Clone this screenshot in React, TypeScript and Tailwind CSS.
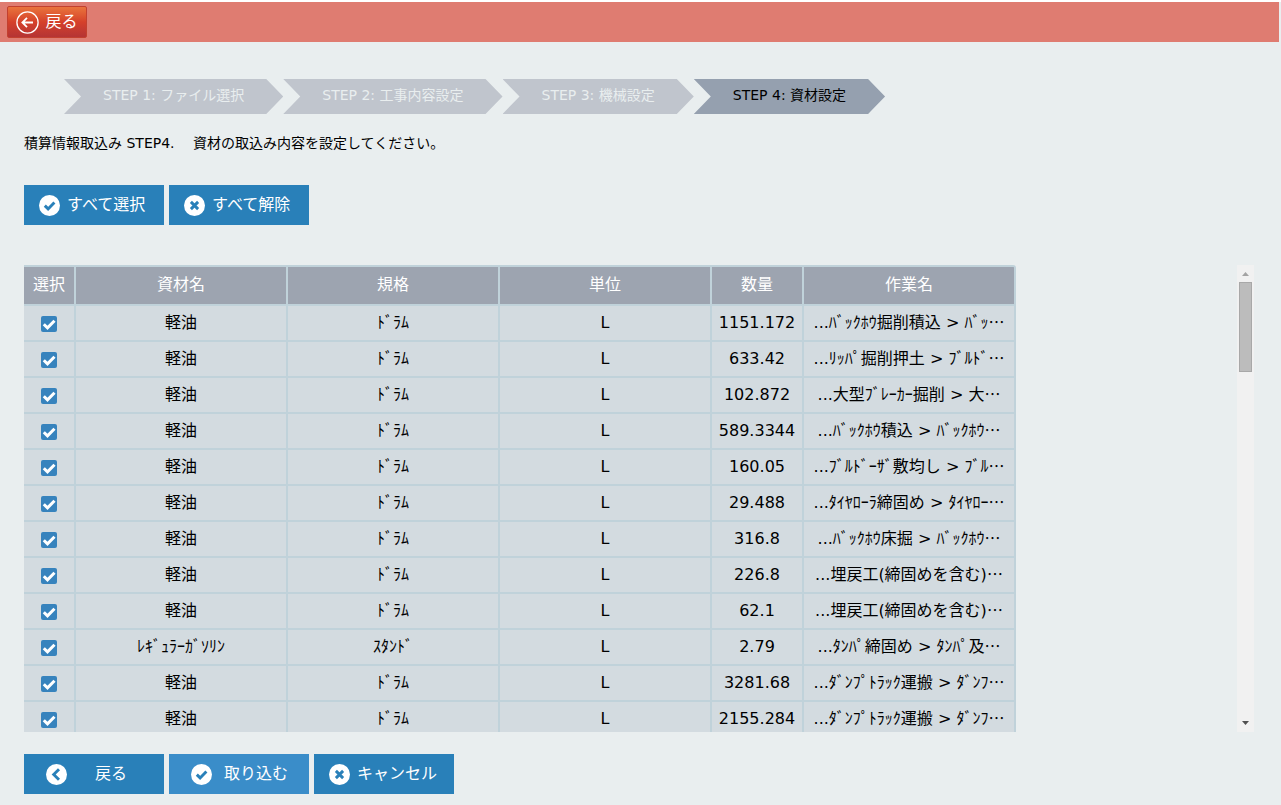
import React, { useState } from 'react';

interface Material {
    name: string;
    spec: string;
    unit: string;
    amount: string;
    work: string;
}

const steps = ['STEP 1: ファイル選択', 'STEP 2: 工事内容設定', 'STEP 3: 機械設定', 'STEP 4: 資材設定'];

const materials: Material[] = [
    { name: '軽油', spec: 'ﾄﾞﾗﾑ', unit: 'L', amount: '1151.172', work: 'ﾊﾞｯｸﾎｳ掘削積込 > ﾊﾞｯ' },
    { name: '軽油', spec: 'ﾄﾞﾗﾑ', unit: 'L', amount: '633.42', work: 'ﾘｯﾊﾟ掘削押土 > ﾌﾞﾙﾄﾞ' },
    { name: '軽油', spec: 'ﾄﾞﾗﾑ', unit: 'L', amount: '102.872', work: '大型ﾌﾞﾚｰｶｰ掘削 > 大' },
    { name: '軽油', spec: 'ﾄﾞﾗﾑ', unit: 'L', amount: '589.3344', work: 'ﾊﾞｯｸﾎｳ積込 > ﾊﾞｯｸﾎｳ' },
    { name: '軽油', spec: 'ﾄﾞﾗﾑ', unit: 'L', amount: '160.05', work: 'ﾌﾞﾙﾄﾞｰｻﾞ敷均し > ﾌﾞﾙ' },
    { name: '軽油', spec: 'ﾄﾞﾗﾑ', unit: 'L', amount: '29.488', work: 'ﾀｲﾔﾛｰﾗ締固め > ﾀｲﾔﾛｰ' },
    { name: '軽油', spec: 'ﾄﾞﾗﾑ', unit: 'L', amount: '316.8', work: 'ﾊﾞｯｸﾎｳ床掘 > ﾊﾞｯｸﾎｳ' },
    { name: '軽油', spec: 'ﾄﾞﾗﾑ', unit: 'L', amount: '226.8', work: '埋戻工(締固めを含む)' },
    { name: '軽油', spec: 'ﾄﾞﾗﾑ', unit: 'L', amount: '62.1', work: '埋戻工(締固めを含む)' },
    { name: 'ﾚｷﾞｭﾗｰｶﾞｿﾘﾝ', spec: 'ｽﾀﾝﾄﾞ', unit: 'L', amount: '2.79', work: 'ﾀﾝﾊﾟ締固め > ﾀﾝﾊﾟ及' },
    { name: '軽油', spec: 'ﾄﾞﾗﾑ', unit: 'L', amount: '3281.68', work: 'ﾀﾞﾝﾌﾟﾄﾗｯｸ運搬 > ﾀﾞﾝﾌ' },
    { name: '軽油', spec: 'ﾄﾞﾗﾑ', unit: 'L', amount: '2155.284', work: 'ﾀﾞﾝﾌﾟﾄﾗｯｸ運搬 > ﾀﾞﾝﾌ' },
];

const columns = [
    { label: '選択', width: 'w-[52px]' },
    { label: '資材名', width: 'w-[212px]' },
    { label: '規格', width: 'w-[212px]' },
    { label: '単位', width: 'w-[212px]' },
    { label: '数量', width: 'w-[92px]' },
    { label: '作業名', width: 'w-[212px]' },
];

const iconPaths = {
    check: 'M5.800 10.600l3.300 3.300 6.300-6.500',
    cross: 'M6.900 6.900l7.200 7.200M14.100 6.900l-7.200 7.200',
    left: 'M13 5.200l-5.300 5.300 5.300 5.300',
};

const CircleIcon: React.FC<{ type: keyof typeof iconPaths }> = ({ type }) => (
    <svg className="w-[21px] h-[21px] shrink-0" viewBox="0 0 21 21" fill="none" aria-hidden="true">
        <circle cx="10.5" cy="10.5" r="10.5" fill="white" />
        <path d={iconPaths[type]} stroke="#2980b9" strokeWidth="2.9" />
    </svg>
);

interface ActionButtonProps {
    icon: keyof typeof iconPaths;
    label: string;
    className?: string;
    onClick?: () => void;
}

const ActionButton: React.FC<ActionButtonProps> = ({ icon, label, className = 'pl-[15px] gap-[7px] bg-[#2980b9]', onClick }) => (
    <button
        type="button"
        onClick={onClick}
        className={`flex w-[140px] h-10 items-center text-base leading-6 text-white whitespace-nowrap ${className}`}
    >
        <CircleIcon type={icon} />
        {label}
    </button>
);

const App: React.FC = () => {
    const [selected, setSelected] = useState<boolean[]>(materials.map(() => true));

    const setAll = (value: boolean) => setSelected(materials.map(() => value));
    const toggle = (index: number) => setSelected(selected.map((v, i) => (i === index ? !v : v)));

    return (
        <div
            lang="ja"
            className="flex h-screen flex-col border-t-2 border-white bg-[#e9eeef] text-black font-['DejaVu_Sans','Noto_Sans_CJK_JP',sans-serif]"
        >
            <header className="flex h-10 shrink-0 items-center bg-[#df7c71] px-[7px] mr-[2px]">
                <button
                    type="button"
                    className="flex h-8 w-20 items-center justify-center gap-[6px] rounded-[2px] border border-[#c3402f] bg-linear-to-b from-[#e9733c] via-[#d5402a] to-[#b53434] text-base leading-6 text-white"
                >
                    <svg className="w-[23px] h-[23px]" viewBox="0 0 23 23" fill="none" stroke="white" aria-hidden="true">
                        <circle cx="11.5" cy="11.5" r="10.6" strokeWidth="1.3" />
                        <path d="M17 11.5H6.6M11 6.9l-4.6 4.6 4.6 4.6" strokeWidth="1.8" />
                    </svg>
                    戻る
                </button>
            </header>

            <main className="flex min-h-0 flex-1 flex-col px-6 pb-[11px]">
                <ol className="ml-10 mt-[37px] flex shrink-0 text-sm">
                    {steps.map((step, i) => (
                        <li
                            key={step}
                            className={`h-[35px] px-[39px] leading-8 whitespace-nowrap [clip-path:polygon(0_0,calc(100%-17px)_0,100%_50%,calc(100%-17px)_100%,0_100%,17px_50%)] ${i === 3 ? 'bg-[#95a0af] text-black' : 'bg-[#c0c5cd] text-[#e9eeef]'}`}
                        >
                            {step}
                        </li>
                    ))}
                </ol>

                <p className="mt-[17px] text-sm leading-6">積算情報取込み STEP4.　 資材の取込み内容を設定してください。</p>

                <div className="mt-[30px] flex gap-[5px]">
                    <ActionButton icon="check" label="すべて選択" onClick={() => setAll(true)} />
                    <ActionButton icon="cross" label="すべて解除" onClick={() => setAll(false)} />
                </div>

                <div className="mt-10 mr-[3px] flex min-h-0 flex-1">
                    <div className="min-w-0 flex-1 overflow-y-auto [scrollbar-width:none]">
                        <table className="w-[992px] table-fixed border-separate border-spacing-0 text-center text-base leading-6">
                            <thead>
                                <tr className="h-[41px]">
                                    {columns.map(col => (
                                        <th
                                            key={col.label}
                                            className={`${col.width} border-y-2 border-r-2 border-[#c0d2da] bg-[#9da4b0] p-0 pb-[2px] font-normal text-white last:rounded-tr-[3px]`}
                                        >
                                            {col.label}
                                        </th>
                                    ))}
                                </tr>
                            </thead>
                            <tbody>
                                {materials.map((m, i) => (
                                    <tr key={i} className="h-9 bg-[#d3dbe0] *:border-b-2 *:border-r-2 *:border-[#c0d2da] *:p-0 *:whitespace-nowrap">
                                        <td>
                                            <label className="relative mx-auto block size-4 translate-y-px">
                                                <input
                                                    type="checkbox"
                                                    aria-label={`${m.name} ${m.amount}`}
                                                    checked={selected[i]}
                                                    onChange={() => toggle(i)}
                                                    className="peer block size-4 appearance-none rounded-[2px] bg-white checked:bg-[#3783bd]"
                                                />
                                                <svg
                                                    className="pointer-events-none absolute inset-0 hidden size-4 peer-checked:block"
                                                    viewBox="0 0 16 16"
                                                    fill="none"
                                                    aria-hidden="true"
                                                >
                                                    <path d="M2.8 8.2l3.7 3.7 7-7.2" stroke="white" strokeWidth="3" />
                                                </svg>
                                            </label>
                                        </td>
                                        <td>{m.name}</td>
                                        <td>{m.spec}</td>
                                        <td>{m.unit}</td>
                                        <td>{m.amount}</td>
                                        <td>
                                            ...{m.work}
                                            <span className="leading-none font-['Noto_Sans_CJK_JP',sans-serif]">…</span>
                                        </td>
                                    </tr>
                                ))}
                            </tbody>
                        </table>
                    </div>

                    <div className="flex w-[17px] shrink-0 flex-col items-center bg-[#f1f1f1]" aria-hidden="true">
                        <svg className="h-[17px] w-[17px]" viewBox="0 0 17 17">
                            <path d="M5 11h7L8.5 7z" fill="#a3a3a3" />
                        </svg>
                        <div className="h-[90px] w-[13px] border border-[#a8a8a8] bg-[#bcbcbc]" />
                        <svg className="mt-auto h-[17px] w-[17px]" viewBox="0 0 17 17">
                            <path d="M5 6h7l-3.5 4z" fill="#505050" />
                        </svg>
                    </div>
                </div>

                <div className="mt-[22px] flex shrink-0 gap-[5px]">
                    <ActionButton icon="left" label="戻る" className="pl-[22px] gap-7 bg-[#2980b9]" />
                    <ActionButton icon="check" label="取り込む" className="pl-[22px] gap-3 bg-[#3a8dc9]" />
                    <ActionButton icon="cross" label="キャンセル" />
                </div>
            </main>
        </div>
    );
};

export default App;
